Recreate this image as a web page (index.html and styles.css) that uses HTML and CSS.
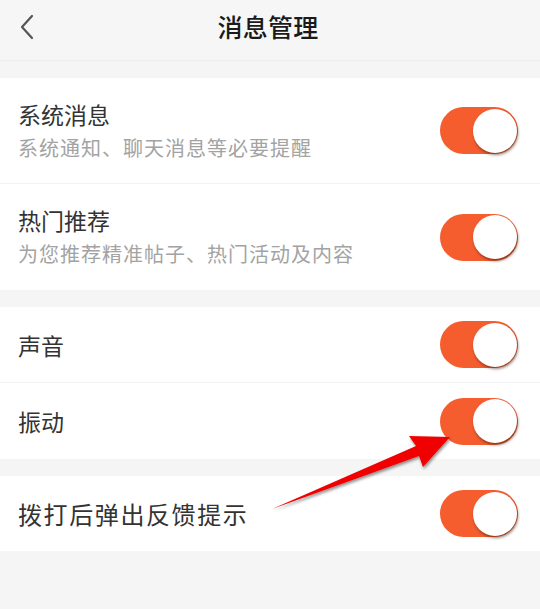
FILE: index.html
```html
<!DOCTYPE html>
<html lang="zh-CN">
<head>
<meta charset="utf-8">
<title>消息管理</title>
<link rel="stylesheet" href="styles.css">
</head>
<body>
<div class="page">
  <header class="topbar">
    <span class="back">
      <svg width="16" height="26" viewBox="0 0 16 26"><path d="M13 2 L3 13 L13 24" fill="none" stroke="#555" stroke-width="2.2" stroke-linecap="round" stroke-linejoin="round"/></svg>
    </span>
    <h1 class="title">消息管理</h1>
  </header>

  <section class="group">
    <div class="row tall">
      <div class="text">
        <div class="name">系统消息</div>
        <div class="desc">系统通知、聊天消息等必要提醒</div>
      </div>
      <span class="toggle"><span class="knob"></span></span>
    </div>
    <div class="row tall">
      <div class="text">
        <div class="name">热门推荐</div>
        <div class="desc">为您推荐精准帖子、热门活动及内容</div>
      </div>
      <span class="toggle"><span class="knob"></span></span>
    </div>
  </section>

  <section class="group">
    <div class="row">
      <div class="name">声音</div>
      <span class="toggle"><span class="knob"></span></span>
    </div>
    <div class="row">
      <div class="name">振动</div>
      <span class="toggle"><span class="knob"></span></span>
    </div>
  </section>

  <section class="group">
    <div class="row">
      <div class="name wide">拨打后弹出反馈提示</div>
      <span class="toggle"><span class="knob"></span></span>
    </div>
  </section>

  <svg class="arrow" width="540" height="609" viewBox="0 0 540 609">
    <defs>
      <filter id="sh" x="-10%" y="-10%" width="120%" height="130%">
        <feDropShadow dx="1" dy="2" stdDeviation="1.5" flood-color="#000" flood-opacity="0.45"/>
      </filter>
    </defs>
    <polygon points="272,509 416,446 409,436 450,437 423,467 419,456" fill="#f00000" filter="url(#sh)"/>
  </svg>
</div>
</body>
</html>
```

FILE: styles.css
```css
html, body {
  margin: 0;
  padding: 0;
}
body {
  background: #f5f5f5;
  font-family: "Noto Sans CJK SC", "Noto Sans", sans-serif;
  width: 540px;
  height: 609px;
  overflow: hidden;
}
.page {
  position: relative;
  width: 540px;
  height: 609px;
}
.topbar {
  height: 60px;
  border-bottom: 1px solid #ededed;
  background: #f6f6f6;
  display: flex;
  align-items: center;
  justify-content: center;
  position: relative;
}
.back {
  position: absolute;
  left: 19px;
  top: 14px;
  display: flex;
}
.title {
  margin: 0 4px 8px 0;
  font-size: 25px;
  font-weight: 500;
  color: #1a1a1a;
  letter-spacing: 0.3px;
  line-height: 34px;
}
.group {
  background: #fff;
  margin-top: 17px;
}
.group + .group {
  margin-top: 17px;
}
.row {
  height: 75px;
  display: flex;
  align-items: center;
  justify-content: space-between;
  padding: 0 22px 0 18px;
  border-bottom: 1px solid #f2f2f2;
}
.row:last-child {
  border-bottom: none;
  height: 76px;
}
.group:last-of-type .row {
  height: 75px;
}
.row.tall {
  align-items: flex-start;
  padding-top: 22px;
  box-sizing: border-box;
  height: 106px;
}
.row.tall .toggle {
  align-self: center;
  margin-top: -22px;
}
.text {
  display: flex;
  flex-direction: column;
}
.name {
  font-size: 23px;
  line-height: 28px;
  color: #333;
}
.name.wide {
  font-size: 24px;
  letter-spacing: 1.6px;
}
.desc {
  font-size: 20px;
  letter-spacing: 1px;
  line-height: 26px;
  color: #a3a3a3;
  margin-top: 7px;
}
.toggle {
  width: 78px;
  height: 47px;
  border-radius: 24px;
  background: #f55d2f;
  display: flex;
  align-items: center;
  justify-content: flex-end;
  padding-right: 1px;
  box-sizing: border-box;
  flex: none;
}
.knob {
  width: 44px;
  height: 44px;
  border-radius: 50%;
  background: #fff;
  box-shadow: 1px 2px 3px rgba(60, 20, 0, 0.55);
}
.arrow {
  position: absolute;
  left: 0;
  top: 0;
  pointer-events: none;
}
```
